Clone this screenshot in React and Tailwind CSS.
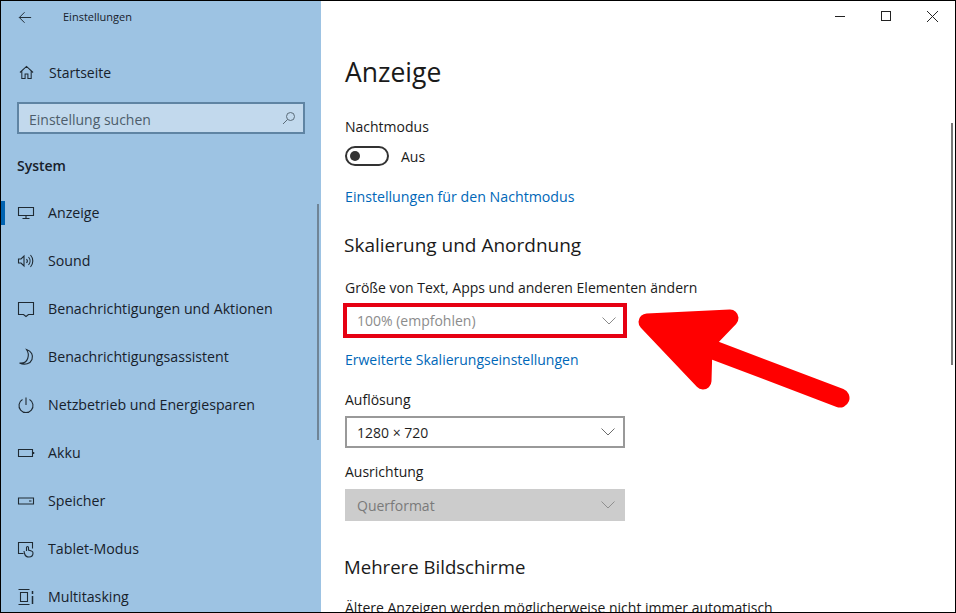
import React from "react";

const font = { fontFamily: '"Open Sans", "Noto Sans", sans-serif' };

const Icon = ({ children, className = "" }) => (
  <svg
    viewBox="0 0 18 18"
    fill="none"
    stroke="#1f2a33"
    strokeWidth="1.1"
    className={`w-[18px] h-[18px] shrink-0 ${className}`}
  >
    {children}
  </svg>
);

const icons = {
  display: (
    <Icon>
      <path d="M1.5 3.5h15v8h-15z M9 11.500v3 M5.500 14.500h7" />
    </Icon>
  ),
  sound: (
    <Icon>
      <path d="M1.5 7v4h2.5l3 3V4L4 7z M9.5 7a3 3 0 0 1 0 4 M11.5 5a6 6 0 0 1 0 8 M13.5 3a9 9 0 0 1 0 12" />
    </Icon>
  ),
  notify: (
    <Icon>
      <path d="M1.5 2.5h15v12h-5l-2.5 2-2.5-2h-5z" />
    </Icon>
  ),
  moon: (
    <Icon>
      <path d="M9.5 1.5c5 1.5 7 6 5.5 10s-7 6-12.5 3.5c4 .5 7-1 8.2-4.5s.6-6.500-1.200-9z" />
    </Icon>
  ),
  power: (
    <Icon>
      <path d="M9 1.500v7.500 M5.500 3.500a7 7 0 1 0 7 0" />
    </Icon>
  ),
  battery: (
    <Icon>
      <path d="M1.500 5.500h14v7h-14z" />
      <path d="M16.500 8v2" strokeWidth="1.500" />
    </Icon>
  ),
  storage: (
    <Icon>
      <path d="M1.500 6h15v6h-15z M12 9h2.500" />
    </Icon>
  ),
  tablet: (
    <Icon>
      <path d="M6.500 13.500h-5v-11h14v6 M9.500 11V7.500a1 1 0 0 1 2 0v2.500l3 1c1 .3 1.500 1 1.500 2 0 2.500-1.500 4-4 4s-4-1.500-4.500-3.500l-.5-2.500" />
    </Icon>
  ),
  multi: (
    <Icon>
      <path d="M1.500 1.500h11 M1.500 16.500h11 M3.500 4.500h7v9h-7z" />
      <path d="M15.500 3v3 M15.500 8v8" strokeWidth="1.500" />
    </Icon>
  ),
};

const navItems = [
  { label: "Anzeige", icon: "display", active: true },
  { label: "Sound", icon: "sound" },
  { label: "Benachrichtigungen und Aktionen", icon: "notify" },
  { label: "Benachrichtigungsassistent", icon: "moon" },
  { label: "Netzbetrieb und Energiesparen", icon: "power" },
  { label: "Akku", icon: "battery" },
  { label: "Speicher", icon: "storage" },
  { label: "Tablet-Modus", icon: "tablet" },
  { label: "Multitasking", icon: "multi" },
];

const Chevron = ({ color = "#6b6b6b" }) => (
  <svg viewBox="0 0 14 8" fill="none" stroke={color} strokeWidth="1" className="w-[14px] h-[8px]">
    <path d="M.5.500 7 7 13.500.500" />
  </svg>
);

const Sidebar = () => (
  <div className="w-[320px] shrink-0 h-full bg-[#9dc3e3] relative overflow-hidden text-[#17212b]">
    <div className="flex items-center h-[32px] pl-[17px]">
      <svg viewBox="0 0 16 14" fill="none" stroke="#1f2a33" strokeWidth="1.100" className="w-[14px] h-[13px]">
        <path d="M15 7H1.500M7.500 1 1.500 7l6 6" />
      </svg>
      <span className="ml-[31px] text-[11px]">Einstellungen</span>
    </div>
    <div className="flex items-center h-[48px] mt-[15px] pl-[18px]">
      <svg viewBox="0 0 16 16" fill="none" stroke="#1f2a33" strokeWidth="1.100" className="w-[15px] h-[15px]">
        <path d="M1 8 8 1.500 15 8 M3 6.500V14.500h3.500v-5h3v5H13V6.500" />
      </svg>
      <span className="ml-[15px] text-[14px]">Startseite</span>
    </div>
    <div className="flex items-center justify-between mx-[16px] mt-[6px] h-[32px] w-[288px] border-2 border-[#5f84a3] bg-[#c2d9ed] pl-[10px] pr-[7px]">
      <span className="pt-[2px] text-[14px] text-[#4d5d6b]">Einstellung suchen</span>
      <svg viewBox="0 0 14 14" fill="none" stroke="#5a6b78" strokeWidth="1" className="w-[14px] h-[14px]">
        <circle cx="8.500" cy="5.500" r="4" />
        <path d="M5.500 8.500 1 13" />
      </svg>
    </div>
    <div className="ml-[16px] mt-[20px] h-[24px] leading-[24px] text-[14px] font-semibold">System</div>
    <div className="mt-[11px]">
      {navItems.map((item) => (
        <div key={item.label} className="relative flex items-center h-[48px] pl-[16px]">
          {item.active && <div className="absolute left-0 top-[12px] h-[24px] w-[4px] bg-[#0063b1]" />}
          {icons[item.icon]}
          <span className="ml-[13px] text-[14.2px] whitespace-nowrap">{item.label}</span>
        </div>
      ))}
    </div>
    <div className="absolute right-[2px] top-[203px] h-[236px] w-[2px] bg-[#6f8496]" />
  </div>
);

const Select = ({ value, className = "", chevron, textClass = "text-[#1f1f1f]" }) => (
  <div className={`flex items-center justify-between ${className}`}>
    <span className={`text-[14px] ${textClass}`}>{value}</span>
    <Chevron color={chevron} />
  </div>
);

const Main = () => (
  <div className="relative flex-1 h-full bg-white overflow-hidden text-[#1a1a1a]">
    <div className="flex justify-end items-center h-[30px]">
      <div className="w-[46px] flex justify-center">
        <div className="w-[10px] h-[1px] bg-[#222]" />
      </div>
      <div className="w-[46px] flex justify-center">
        <div className="w-[10px] h-[10px] border border-[#222]" />
      </div>
      <div className="w-[46px] flex justify-center">
        <svg viewBox="0 0 10 10" stroke="#222" strokeWidth="0.900" className="w-[11px] h-[11px]">
          <path d="M0 0 10 10M10 0 0 10" />
        </svg>
      </div>
    </div>
    <div className="pl-[24px]">
      <h1 className="mt-[22px] h-[38px] leading-[38px] text-[26.5px]">Anzeige</h1>
      <div className="mt-[26px] h-[20px] leading-[20px] text-[14px]">Nachtmodus</div>
      <div className="mt-[9px] flex items-center h-[20px]">
        <div className="w-[44px] h-[20px] rounded-full border-2 border-[#333] flex items-center pl-[3px]">
          <div className="w-[10px] h-[10px] rounded-full bg-[#333]" />
        </div>
        <span className="ml-[12px] text-[14px]">Aus</span>
      </div>
      <div className="mt-[21px] h-[20px] leading-[20px] text-[14.2px] text-[#0067b8]">Einstellungen für den Nachtmodus</div>
      <h2 className="mt-[24px] -ml-[1px] h-[28px] leading-[28px] text-[19px]">Skalierung und Anordnung</h2>
      <div className="mt-[19px] h-[20px] leading-[20px] text-[14px]">Größe von Text, Apps und anderen Elementen ändern</div>
      <div className="mt-[5px] -ml-[2px] w-[284px] h-[35px] border-[4px] border-[#e60012]">
        <Select value="100% (empfohlen)" className="h-[27px] pl-[10px] pr-[7px]" chevron="#8a8a8a" textClass="text-[#8c8c8c]" />
      </div>
      <div className="mt-[12px] h-[20px] leading-[20px] text-[14px] text-[#0067b8]">Erweiterte Skalierungseinstellungen</div>
      <div className="mt-[20px] h-[20px] leading-[20px] text-[14px]">Auflösung</div>
      <div className="mt-[6px]">
        <Select value="1280 × 720" className="w-[280px] h-[32px] pl-[10px] pr-[8px] border-2 border-[#999]" />
      </div>
      <div className="mt-[14px] h-[20px] leading-[20px] text-[14px]">Ausrichtung</div>
      <div className="mt-[7px]">
        <Select value="Querformat" className="w-[280px] h-[32px] pl-[12px] pr-[10px] bg-[#cccccc]" chevron="#8f8f8f" textClass="text-[#7a7a7a]" />
      </div>
      <h2 className="mt-[32px] -ml-[1px] h-[28px] leading-[28px] text-[18.6px]">Mehrere Bildschirme</h2>
      <div className="mt-[17px] h-[20px] leading-[20px] text-[14px] whitespace-nowrap">Ältere Anzeigen werden möglicherweise nicht immer automatisch</div>
    </div>
    <div className="absolute right-[2px] top-[122px] h-[242px] w-[2px] bg-[#777]" />
  </div>
);

export default function App() {
  return (
    <div style={font} className="relative w-[956px] h-[613px] overflow-hidden flex border border-black bg-white">
      <Sidebar />
      <Main />
      <svg viewBox="0 0 956 613" className="absolute -left-px -top-px w-[956px] h-[613px] pointer-events-none">
        <path d="M647 322 730 318 704 345 703 381z" fill="#ff0000" stroke="#ff0000" strokeWidth="17" strokeLinejoin="round" />
        <path d="M695 343 840 398" stroke="#ff0000" strokeWidth="19" strokeLinecap="round" />
      </svg>
    </div>
  );
}
